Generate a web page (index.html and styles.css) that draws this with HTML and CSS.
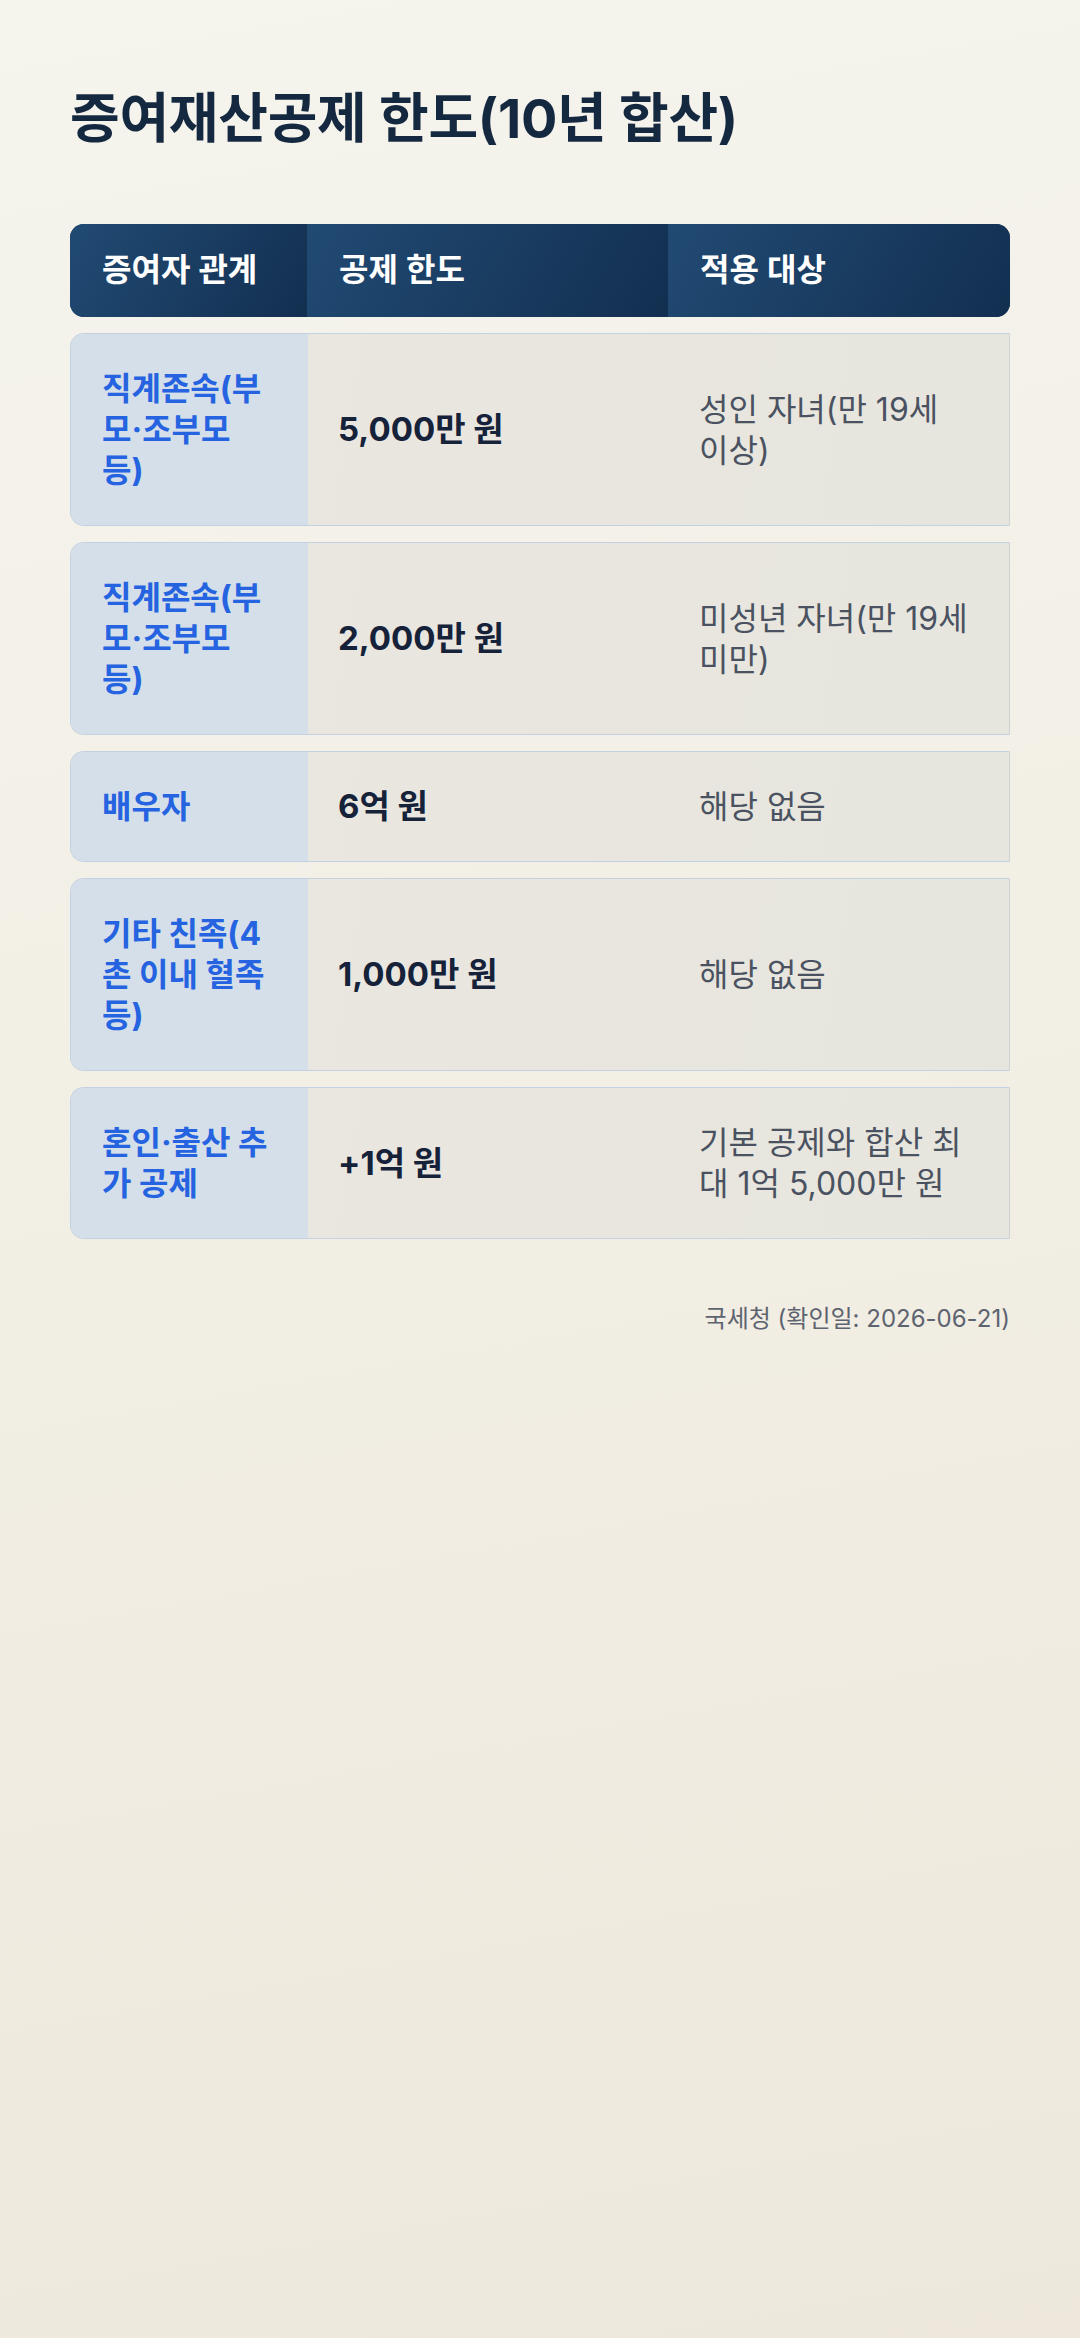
FILE: index.html
```html
<!DOCTYPE html>
<html lang="ko">
<head>
<meta charset="utf-8">
<title>증여재산공제 한도</title>
<link rel="stylesheet" href="styles.css">
</head>
<body>
<main class="page">
  <h1 class="title">증여재산공제 한도(10년 합산)</h1>
  <div class="table">
    <div class="row head">
      <div class="cell">증여자 관계</div>
      <div class="cell">공제 한도</div>
      <div class="cell">적용 대상</div>
    </div>
    <div class="row">
      <div class="cell rel">직계존속(부모·조부모 등)</div>
      <div class="cell amt">5,000만 원</div>
      <div class="cell tgt keep">성인 자녀(만 19세 이상)</div>
    </div>
    <div class="row">
      <div class="cell rel">직계존속(부모·조부모 등)</div>
      <div class="cell amt">2,000만 원</div>
      <div class="cell tgt keep">미성년 자녀(만 19세 미만)</div>
    </div>
    <div class="row">
      <div class="cell rel">배우자</div>
      <div class="cell amt">6억 원</div>
      <div class="cell tgt">해당 없음</div>
    </div>
    <div class="row">
      <div class="cell rel">기타 친족(4촌 이내 혈족 등)</div>
      <div class="cell amt">1,000만 원</div>
      <div class="cell tgt">해당 없음</div>
    </div>
    <div class="row">
      <div class="cell rel">혼인·출산 추가 공제</div>
      <div class="cell amt">+1억 원</div>
      <div class="cell tgt">기본 공제와 합산 최대 1억 5,000만 원</div>
    </div>
  </div>
  <p class="source">국세청 (확인일: 2026-06-21)</p>
</main>
</body>
</html>
```
FILE: styles.css
```css
html, body {
  margin: 0;
  padding: 0;
}
body {
  min-height: 2338px;
  background: linear-gradient(170deg, #f5f4ed 0%, #f2efe5 45%, #eee8dc 100%);
  font-family: Inter, "Noto Sans CJK KR", sans-serif;
}
.page {
  padding: 88px 70px 0 70px;
}
.title {
  margin: 0 0 74px 0;
  font-size: 54px;
  line-height: 62px;
  font-weight: 700;
  color: #142840;
  letter-spacing: -0.005em;
}
.table {
  display: flex;
  flex-direction: column;
  gap: 16px;
}
.row {
  display: grid;
  grid-template-columns: 237px 361px 1fr;
  border: 1px solid #c3d2e2;
  border-right-color: #cfd2d4;
  border-radius: 14px 0 0 14px;
  overflow: hidden;
  background: linear-gradient(100deg, #e9e7df 0%, #e8e6de 60%, #e7e6de 100%);
}
.cell {
  padding: 34px 28px 34px 30px;
  font-size: 32px;
  line-height: 41px;
  display: flex;
  align-items: center;
}
.keep {
  word-break: keep-all;
}
.rel {
  background: #d4dfe9;
  color: #2563e0;
  font-weight: 700;
  display: block;
  align-self: stretch;
  padding-left: 31px;
  padding-right: 36px;
}
.amt {
  color: #15223a;
  font-weight: 700;
  font-size: 33px;
}
.tgt {
  color: #4a5261;
  font-weight: 400;
}
.row.head {
  border: none;
  border-radius: 14px;
  background: #173659;
}
.row.head .cell {
  padding: 25px 32px 26px 32px;
  color: #ffffff;
  font-weight: 600;
  font-size: 32px;
  line-height: 42px;
  background: linear-gradient(120deg, #214a73 0%, #1a3d62 50%, #122f50 100%);
}
.source {
  margin: 63px 0 0 0;
  text-align: right;
  font-size: 24px;
  line-height: 34px;
  color: #5d6470;
}
```
